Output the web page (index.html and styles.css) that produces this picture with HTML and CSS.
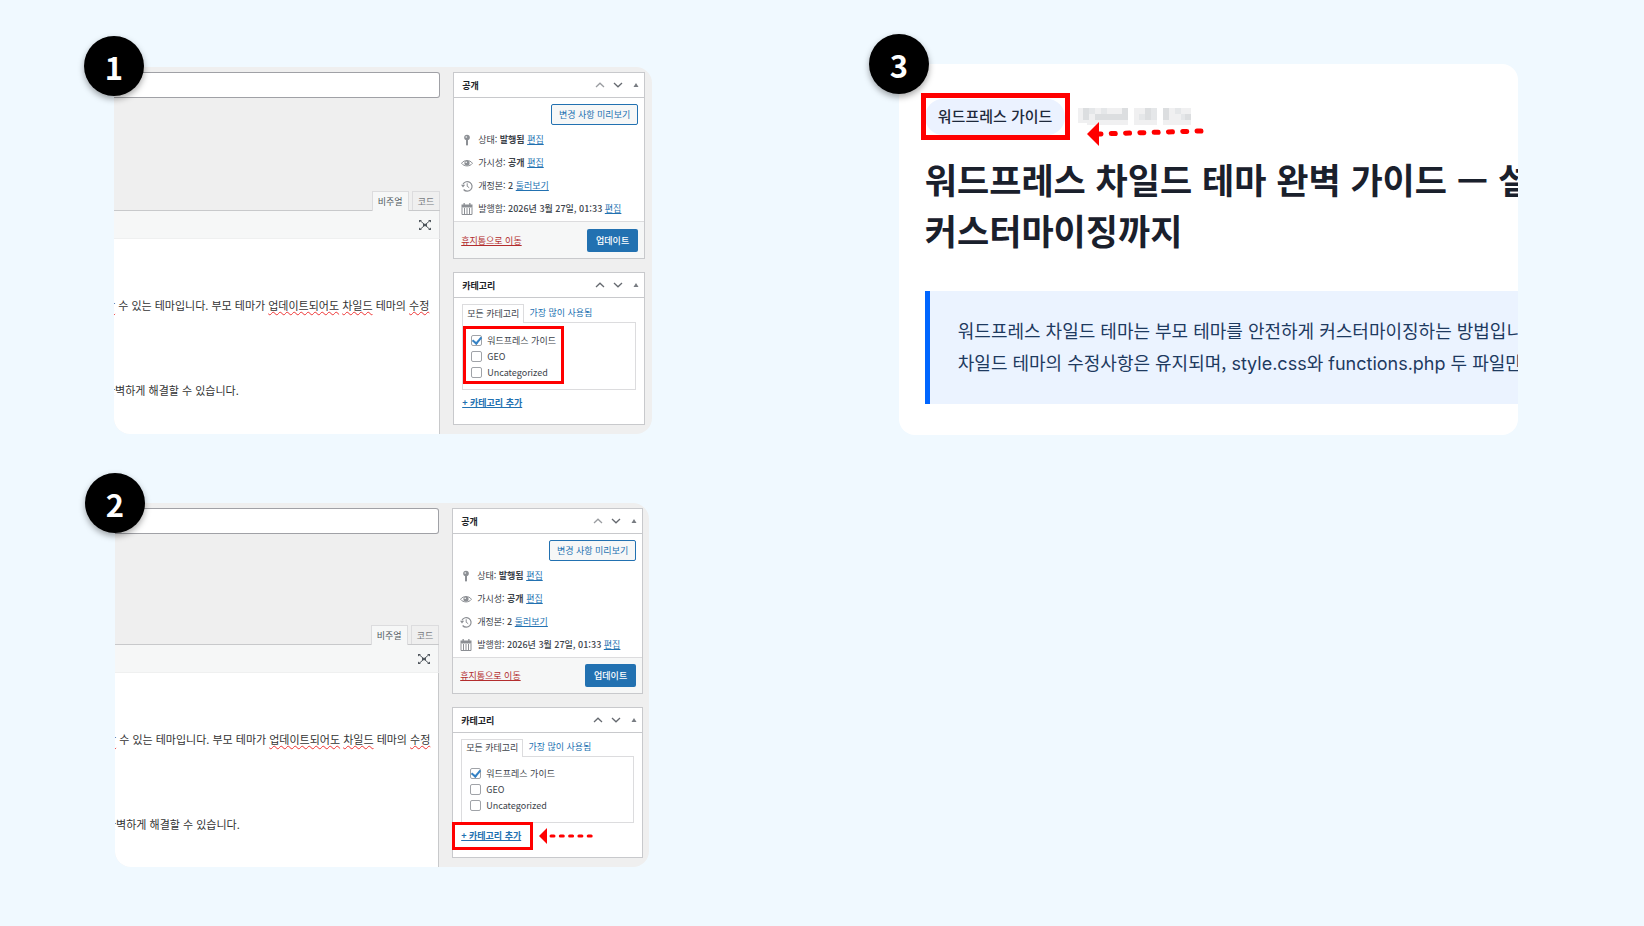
FILE: index.html
```html
<!DOCTYPE html>
<html lang="ko">
<head>
	<meta charset="UTF-8">
	<title>워드프레스 카테고리</title>
	<link rel="stylesheet" href="styles.css">
</head>
<body>
	<!-- shared icons -->
	<svg class="sprite" aria-hidden="true">
		<symbol id="up" viewBox="0 0 10 6"><path d="M1 5 5 1.2 9 5" fill="none" stroke="currentColor" stroke-width="1.3"/></symbol>
		<symbol id="down" viewBox="0 0 10 6"><path d="M1 1 5 4.8 9 1" fill="none" stroke="currentColor" stroke-width="1.3"/></symbol>
		<symbol id="toggle" viewBox="0 0 6 6"><path d="M.5 5 3 1 5.5 5z" fill="currentColor"/></symbol>
		<symbol id="pin" viewBox="0 0 12 12"><circle cx="6" cy="3.5" r="2.8" fill="currentColor"/><path d="M5 6h2v4.500l-1 1.500-1-1.500z" fill="currentColor"/><circle cx="5.3" cy="3" r=".9" fill="#d5d7d9"/></symbol>
		<symbol id="eye" viewBox="0 0 12 12"><path d="M.5 6.300C3.200 2.600 8.800 2.600 11.500 6.300 8.800 9.800 3.200 9.800.5 6.300z" fill="none" stroke="currentColor"/><circle cx="6" cy="6" r="2.6" fill="currentColor"/><circle cx="5.2" cy="5.2" r=".8" fill="#fff"/></symbol>
		<symbol id="history" viewBox="0 0 12 12"><path d="M2 4.200A4.800 4.800 0 1 1 2.600 9.500" fill="none" stroke="currentColor" stroke-width="1.2"/><path d="M0 4.800h4.200L2 7.500z" fill="currentColor"/><path d="M6.200 3.300v3l2 1.400" fill="none" stroke="currentColor"/></symbol>
		<symbol id="calendar" viewBox="0 0 12 12"><path d="M.5 1.500h11v3.100H.5zM2.500 0h1.300v2H2.500zM8.200 0h1.300v2H8.200z" fill="currentColor"/><path d="M1 4.500v7h10v-7M3.500 5v6M6 5v6M8.500 5v6" fill="none" stroke="currentColor"/></symbol>
		<symbol id="expand" viewBox="0 0 12 12"><path d="M1 1.500 11 10.500M11 1.500 1 10.500" stroke="currentColor"/><path d="M4 4.800h4v2.400H4zM0 1h3L0 3.500zM12 1H9l3 2.500zM0 11h3L0 8.500zM12 11H9l3-2.500z" fill="currentColor"/></symbol>
	</svg>

	<main class="steps">
		<section class="step">
			<span class="badge">1</span>
			<div class="card wp">
				<div class="editor">
					<input class="title" type="text" aria-label="제목">
					<div class="tabs">
						<button class="tab active" type="button">비주얼</button>
						<button class="tab" type="button">코드</button>
					</div>
					<div class="toolbar">
						<button class="icon-btn" type="button" aria-label="전체 화면"><svg class="icon"><use href="#expand"/></svg></button>
					</div>
					<div class="content">
						<p><u>할</u> 수 있는 테마입니다. 부모 테마가 <u>업데이트되어도</u> <u>차일드</u> 테마의 <u>수정</u></p>
						<p>완벽하게 해결할 수 있습니다.</p>
					</div>
				</div>
				<aside class="sidebar">
					<div class="panel">
						<header>
							<h2>공개</h2>
							<svg class="arrow dim"><use href="#up"/></svg>
							<svg class="arrow"><use href="#down"/></svg>
							<svg class="toggle"><use href="#toggle"/></svg>
						</header>
						<div class="publish">
							<button class="preview" type="button">변경 사항 미리보기</button>
							<ul>
								<li><svg class="icon"><use href="#pin"/></svg><span>상태: <b>발행됨</b> <a href="#">편집</a></span></li>
								<li><svg class="icon"><use href="#eye"/></svg><span>가시성: <b>공개</b> <a href="#">편집</a></span></li>
								<li><svg class="icon"><use href="#history"/></svg><span>개정본: <strong>2</strong> <a href="#">둘러보기</a></span></li>
								<li><svg class="icon"><use href="#calendar"/></svg><span>발행함: <strong>2026년 3월 27일, 01:33</strong> <a href="#">편집</a></span></li>
							</ul>
						</div>
						<footer>
							<a class="trash" href="#">휴지통으로 이동</a>
							<button class="update" type="button">업데이트</button>
						</footer>
					</div>
					<div class="panel">
						<header>
							<h2>카테고리</h2>
							<svg class="arrow"><use href="#up"/></svg>
							<svg class="arrow"><use href="#down"/></svg>
							<svg class="toggle"><use href="#toggle"/></svg>
						</header>
						<div class="categories">
							<div class="cat-tabs">
								<a class="active" href="#">모든 카테고리</a>
								<a href="#">가장 많이 사용됨</a>
							</div>
							<div class="cat-list">
								<label><input type="checkbox" checked>워드프레스 가이드</label>
								<label><input type="checkbox">GEO</label>
								<label><input type="checkbox">Uncategorized</label>
								<div class="mark mark-list"></div>
							</div>
							<div class="add"><a href="#">+ 카테고리 추가</a></div>
						</div>
					</div>
				</aside>
			</div>
		</section>

		<section class="step">
			<span class="badge">3</span>
			<div class="card post">
				<div class="meta">
					<a class="tag" href="#">워드프레스 가이드</a>
					<svg class="date" viewBox="0 0 114 18" aria-hidden="true">
						<path d="M0 0h50v17H9v-2H0zM56 0h23v17H56zM85 0h28v17H85z" fill="#f0f0f1"/>
						<path d="M5 0h6v12H5zM17 6h33v6H17zM44 0h6v6h-6zM67 0h6v12h-6zM85 0h6v12h-6zM107 6h6v6h-6z" fill="#dcdee0"/>
						<path d="M11 0h6v6h-6zM23 0h6v6h-6zM61 6h6v6h-6zM73 0h6v12h-6zM97 0h6v6h-6zM103 6h4v6h-4z" fill="#e5e7e9"/>
					</svg>
					<div class="mark mark-tag"></div>
					<svg class="pointer pointer-tag" viewBox="0 0 118 24" aria-hidden="true">
						<path d="M0 12 12 0v24z" fill="#f00"/>
						<path d="M10 12 114 9" fill="none" stroke="#f00" stroke-width="5" stroke-linecap="round" stroke-dasharray="4 10.300"/>
					</svg>
				</div>
				<h1>워드프레스 차일드 테마 완벽 가이드 — 설정부터<br>커스터마이징까지</h1>
				<blockquote>워드프레스 차일드 테마는 부모 테마를 안전하게 커스터마이징하는 방법입니다.<br>차일드 테마의 수정사항은 유지되며, <code>style.css</code>와 <code>functions.php</code> 두 파일만</blockquote>
			</div>
		</section>

		<section class="step second">
			<span class="badge">2</span>
			<div class="card wp">
				<div class="editor">
					<input class="title" type="text" aria-label="제목">
					<div class="tabs">
						<button class="tab active" type="button">비주얼</button>
						<button class="tab" type="button">코드</button>
					</div>
					<div class="toolbar">
						<button class="icon-btn" type="button" aria-label="전체 화면"><svg class="icon"><use href="#expand"/></svg></button>
					</div>
					<div class="content">
						<p><u>할</u> 수 있는 테마입니다. 부모 테마가 <u>업데이트되어도</u> <u>차일드</u> 테마의 <u>수정</u></p>
						<p>완벽하게 해결할 수 있습니다.</p>
					</div>
				</div>
				<aside class="sidebar">
					<div class="panel">
						<header>
							<h2>공개</h2>
							<svg class="arrow dim"><use href="#up"/></svg>
							<svg class="arrow"><use href="#down"/></svg>
							<svg class="toggle"><use href="#toggle"/></svg>
						</header>
						<div class="publish">
							<button class="preview" type="button">변경 사항 미리보기</button>
							<ul>
								<li><svg class="icon"><use href="#pin"/></svg><span>상태: <b>발행됨</b> <a href="#">편집</a></span></li>
								<li><svg class="icon"><use href="#eye"/></svg><span>가시성: <b>공개</b> <a href="#">편집</a></span></li>
								<li><svg class="icon"><use href="#history"/></svg><span>개정본: <strong>2</strong> <a href="#">둘러보기</a></span></li>
								<li><svg class="icon"><use href="#calendar"/></svg><span>발행함: <strong>2026년 3월 27일, 01:33</strong> <a href="#">편집</a></span></li>
							</ul>
						</div>
						<footer>
							<a class="trash" href="#">휴지통으로 이동</a>
							<button class="update" type="button">업데이트</button>
						</footer>
					</div>
					<div class="panel">
						<header>
							<h2>카테고리</h2>
							<svg class="arrow"><use href="#up"/></svg>
							<svg class="arrow"><use href="#down"/></svg>
							<svg class="toggle"><use href="#toggle"/></svg>
						</header>
						<div class="categories">
							<div class="cat-tabs">
								<a class="active" href="#">모든 카테고리</a>
								<a href="#">가장 많이 사용됨</a>
							</div>
							<div class="cat-list">
								<label><input type="checkbox" checked>워드프레스 가이드</label>
								<label><input type="checkbox">GEO</label>
								<label><input type="checkbox">Uncategorized</label>
							</div>
							<div class="add">
								<a href="#">+ 카테고리 추가</a>
								<div class="mark mark-add"></div>
								<svg class="pointer pointer-add" viewBox="0 0 56 16" aria-hidden="true">
									<path d="M0 8 8 0v16z" fill="#f00"/>
									<path d="M12 8h42" fill="none" stroke="#f00" stroke-width="3" stroke-linecap="round" stroke-dasharray="3 6.300"/>
								</svg>
							</div>
						</div>
					</div>
				</aside>
			</div>
		</section>
	</main>
</body>
</html>
```
FILE: styles.css
```css
* {
	box-sizing: border-box;
}
body {
	margin: 0;
	min-height: 100vh;
	background: #f0f9ff;
	font-family: "Noto Sans CJK KR", sans-serif;
}
h1, h2, p, ul, blockquote {
	margin: 0;
	padding: 0;
}
button, input {
	font: inherit;
	margin: 0;
}
.sprite {
	position: absolute;
	width: 0;
	height: 0;
}
.steps {
	display: grid;
	grid-template-columns: 538fr 619fr;
	column-gap: 15vw;
	row-gap: 68px;
	align-items: start;
	padding: 64px 126px 58px 114px;
}
.step {
	position: relative;
	min-width: 0;
}
.step:first-child {
	padding-top: 3px;
}
.badge {
	position: absolute;
	top: -30px;
	left: -30px;
	z-index: 2;
	display: flex;
	align-items: center;
	justify-content: center;
	width: 60px;
	height: 60px;
	border-radius: 50%;
	background: #000;
	color: #fff;
	font-size: 31px;
	font-weight: 700;
	box-shadow: 0 3px 6px rgba(0,0,0,0.35);
}
.step:first-child .badge {
	top: -28px;
}
.card {
	overflow: hidden;
	border-radius: 16px;
}

/* ----- WORDPRESS EDITOR ----- */
.wp {
	display: flex;
	gap: 13px;
	padding-right: 7px;
	background: #efefef;
	font-size: 9px;
	line-height: 13px;
	color: #3c434a;
}
.wp a {
	color: #2271b1;
}
.editor {
	flex: 1;
	min-width: 0;
	display: flex;
	flex-direction: column;
	padding-top: 5px;
}
.title {
	width: 100%;
	height: 26px;
	border: 1px solid #a0a1a6;
	border-left: 0;
	border-radius: 0 3px 3px 0;
	background: #fff;
}
.tabs {
	display: flex;
	justify-content: flex-end;
	gap: 3px;
	margin-top: 93px;
	border-bottom: 1px solid #c8c9cb;
}
.tab {
	height: 19px;
	padding: 0 5px;
	border: 1px solid #dcdcde;
	border-bottom: 0;
	background: #efefef;
	color: #787c82;
	font-size: 9px;
	line-height: 15px;
}
.tab.active {
	margin-bottom: -1px;
	height: 20px;
	background: #f6f7f7;
	color: #50575e;
}
.toolbar {
	display: flex;
	justify-content: flex-end;
	align-items: center;
	height: 28px;
	padding-right: 8px;
	border-right: 1px solid #dcdcde;
	border-bottom: 1px solid #eff0f0;
	background: #f6f7f7;
}
.icon-btn {
	display: flex;
	padding: 0;
	border: 0;
	background: none;
	color: #50575e;
}
.icon {
	flex: none;
	width: 12px;
	height: 12px;
}
.content {
	flex: 1;
	padding-top: 58px;
	border-right: 1px solid #c8c9cb;
	background: #fff;
	font-size: 11px;
	line-height: 17px;
	color: #333;
	overflow: hidden;
}
.content p {
	margin-left: -9px;
	white-space: nowrap;
}
.content p + p {
	margin-top: 68px;
}
.content u {
	text-decoration: underline wavy #e33 1px;
	text-underline-offset: 1px;
	text-decoration-skip-ink: none;
}
.sidebar {
	width: 192px;
	padding: 5px 0 9px;
}
.panel {
	border: 1px solid #c8c9cc;
	background: #fff;
}
.panel + .panel {
	margin-top: 13px;
}
.panel header {
	display: flex;
	align-items: center;
	height: 25px;
	padding: 0 5px 0 8px;
	border-bottom: 1px solid #c8c9cc;
}
.panel h2 {
	flex: 1;
	font-size: 9px;
	font-weight: 700;
	color: #1d2327;
}
.arrow {
	width: 10px;
	height: 6px;
	margin-right: 10px;
	color: #666a70;
}
.arrow + .arrow {
	margin-left: -2px;
}
.arrow.dim {
	color: #9a9da1;
}
.toggle {
	width: 6px;
	height: 6px;
	color: #787c82;
}
.publish {
	display: flex;
	flex-direction: column;
	padding: 6px 6px 1px 7px;
}
.preview {
	align-self: flex-end;
	height: 21px;
	padding: 0 7px;
	border: 1px solid #2271b1;
	border-radius: 2px;
	background: #f6f7f7;
	color: #2271b1;
	font-size: 9px;
	line-height: 15px;
}
.publish ul {
	margin-top: 3px;
	list-style: none;
}
.publish li {
	display: flex;
	align-items: center;
	gap: 5px;
	height: 23px;
	white-space: nowrap;
}
.publish strong {
	font-weight: 500;
}
.publish .icon {
	color: #8c8f94;
}
.panel footer {
	display: flex;
	align-items: center;
	justify-content: space-between;
	height: 37px;
	padding: 0 6px 0 7px;
	border-top: 1px solid #dcdcde;
	background: #f6f7f7;
}
.wp .trash {
	color: #b32d2e;
}
.update {
	height: 23px;
	padding: 0 9px;
	border: 0;
	border-radius: 2px;
	background: #2271b1;
	color: #fff;
	font-size: 9px;
	font-weight: 500;
}
.categories {
	padding: 6px 8px 15px;
}
.cat-tabs {
	display: flex;
}
.cat-tabs a {
	padding: 2px 4px 3px 5px;
	text-decoration: none;
}
.cat-tabs .active {
	position: relative;
	z-index: 1;
	padding: 2px 4px;
	margin-bottom: -1px;
	border: 1px solid #dcdcde;
	border-bottom: 0;
	background: #fff;
	color: #3c434a;
}
.cat-list {
	position: relative;
	height: 68px;
	padding: 9px 8px;
	border: 1px solid #dcdcde;
	background: #fff;
}
.cat-list label {
	display: flex;
	align-items: center;
	gap: 5px;
	height: 16px;
}
.cat-list input {
	appearance: none;
	display: flex;
	align-items: center;
	justify-content: center;
	width: 11px;
	height: 11px;
	border: 1px solid #a0a3a8;
	border-radius: 2px;
	background: #fff;
}
.cat-list input:checked::before {
	content: "";
	width: 4px;
	height: 7px;
	margin-bottom: 2px;
	border: solid #3582c4;
	border-width: 0 2px 2px 0;
	transform: rotate(40deg);
}
.add {
	position: relative;
	margin-top: 6px;
	font-weight: 700;
}

/* ----- RED ANNOTATIONS ----- */
.mark {
	position: absolute;
	border: 3px solid #f00;
	pointer-events: none;
}
.mark-list {
	top: 3px;
	left: 0;
	width: 101px;
	height: 58px;
}
.mark-add {
	top: -7px;
	left: -9px;
	width: 81px;
	height: 28px;
}
.pointer {
	position: absolute;
}
.pointer-add {
	top: -1px;
	left: 78px;
	width: 56px;
	height: 16px;
}

/* ----- SECOND STEP ----- */
.second {
	margin: 0 3px 0 1px;
}
.second .tabs {
	margin-top: 91px;
}
.second .sidebar {
	width: 191px;
}
.second .panel footer {
	height: 36px;
}
.second .cat-tabs a {
	padding-top: 1px;
}
.second .cat-list {
	height: 67px;
	padding-top: 8px;
}
.second .wp {
	padding-right: 6px;
}

/* ----- POST PREVIEW ----- */
.post {
	padding: 35px 0 31px 26px;
	background: #fff;
	color: #1a202c;
}
.meta {
	position: relative;
	display: flex;
	align-items: center;
	gap: 13px;
}
.tag {
	height: 36px;
	padding: 0 13px;
	border-radius: 18px;
	background: #ebf2ff;
	color: #1e293b;
	font-size: 15px;
	font-weight: 500;
	line-height: 34px;
	text-decoration: none;
}
.date {
	width: 114px;
	height: 18px;
}
.mark-tag {
	top: -6px;
	left: -4px;
	width: 149px;
	height: 47px;
	border-width: 5px;
}
.pointer-tag {
	top: 23px;
	left: 162px;
	width: 118px;
	height: 24px;
}
.post h1 {
	margin-top: 18px;
	font-size: 35px;
	font-weight: 700;
	line-height: 51px;
	white-space: nowrap;
}
.post blockquote {
	margin-top: 36px;
	padding: 23px 0 24px 28px;
	border-left: 5px solid #0066ff;
	background: #ebf3ff;
	color: #1e3a5f;
	font-size: 18px;
	line-height: 32px;
	white-space: nowrap;
}
.post code {
	font-family: Inter, sans-serif;
}
```
